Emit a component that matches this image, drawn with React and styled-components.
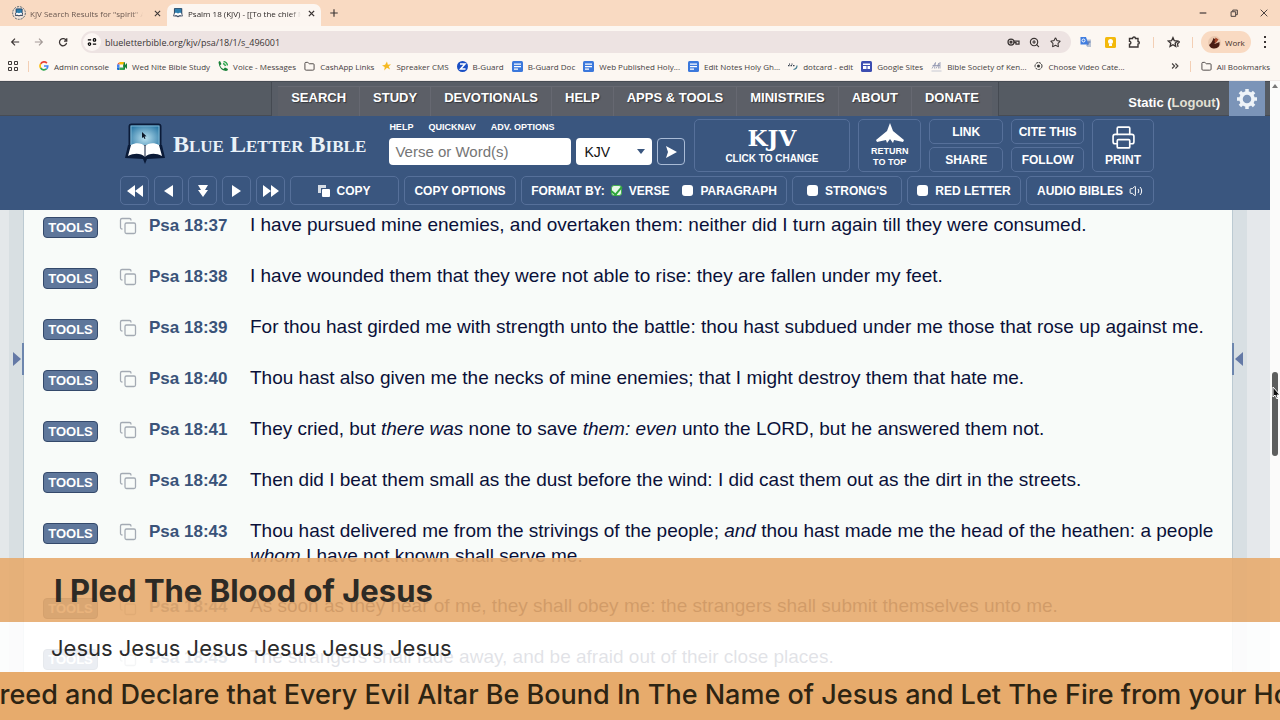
import React from "react";
import styled, { createGlobalStyle, css } from "styled-components";
import { Copy, Printer, Volume2, Star, Folder, ZoomIn } from "lucide-react";

const ui = `"Open Sans", "Noto Sans", sans-serif`;
const arial = `"Liberation Sans", Arial, sans-serif`;
const banner = `Inter, "Liberation Sans", sans-serif`;

const GlobalStyle = createGlobalStyle`
  * { box-sizing: border-box; }
  html, body, #root { height: 100%; }
  body { margin: 0; overflow: hidden; background: #f9fbf9; font-family: ${arial}; }
  button { font: inherit; color: inherit; background: none; border: 0; padding: 0; margin: 0; }
  a { color: inherit; text-decoration: none; }
  svg { display: block; flex: none; }
`;

const Window = styled.div`
  height: 100vh;
  display: flex;
  flex-direction: column;
  overflow: hidden;
  position: relative;
`;

/* ---------- browser chrome ---------- */
const TabStrip = styled.div`
  height: 26px;
  flex: none;
  display: flex;
  align-items: flex-end;
  background: #f9dac2;
  font: 8px ${ui};
  color: #4b4240;
`;
const Tab = styled.div`
  height: 22px;
  width: ${(p) => (p.$active ? 154 : 156)}px;
  margin-left: ${(p) => (p.$active ? 0 : 11)}px;
  padding: 0 5px 4px ${(p) => (p.$active ? 6 : 1)}px;
  display: flex;
  align-items: center;
  gap: ${(p) => (p.$active ? 5 : 4)}px;
  border-radius: 7px 7px 0 0;
  background: ${(p) => (p.$active ? "#fcf6f1" : "transparent")};
  color: ${(p) => (p.$active ? "#2c2726" : "#6a5850")};
`;
const TabTitle = styled.span`
  width: 113px;
  margin-right: auto;
  overflow: hidden;
  white-space: nowrap;
  mask-image: linear-gradient(to right, #000 90%, transparent);
`;
const IconButton = styled.button`
  display: grid;
  place-items: center;
  width: ${(p) => p.$w || 14}px;
  height: 18px;
  color: ${(p) => p.$color || "#3b3534"};
`;
const NewTab = styled(IconButton)`
  margin: 0 auto 4px 6px;
`;
const WindowButtons = styled.div`
  display: flex;
  gap: 13px;
  padding: 0 8px 4px 0;
`;
const AddressRow = styled.div`
  height: 32px;
  flex: none;
  display: flex;
  align-items: center;
  padding: 0 11px 0 8px;
  background: #fcf7f2;
`;
const NavButtons = styled.div`
  display: flex;
  gap: 10px;
  margin-right: 11px;
`;
const AddressBar = styled.div`
  flex: 1;
  height: 22px;
  border-radius: 11px;
  background: #ede3e2;
  display: flex;
  align-items: center;
  padding: 0 9px 0 2px;
`;
const SiteInfo = styled.button`
  width: 18px;
  height: 18px;
  border-radius: 9px;
  background: #fcf6f3;
  display: grid;
  place-items: center;
`;
const UrlInput = styled.input`
  flex: 1;
  border: 0;
  outline: 0;
  padding: 0 0 0 4px;
  background: none;
  font: 9px ${ui};
  color: #3a3535;
`;
const BarIcons = styled.div`
  display: flex;
  gap: 7px;
`;
const Extensions = styled.div`
  display: flex;
  align-items: center;
  gap: 10px;
  margin-left: 8px;
`;
const Divider = styled.i`
  width: 1px;
  height: 11px;
  margin: 0 2px;
  background: #f3cfb5;
`;
const Profile = styled.button`
  width: 50px;
  height: 22px;
  border-radius: 11px;
  background: #f9dac2;
  display: flex;
  align-items: center;
  gap: 4px;
  padding-left: 7px;
  margin: 0 10px 0 -4px;
  font: 8px ${ui};
  color: #3b2a22;
`;
const Bookmarks = styled.nav`
  height: 23px;
  flex: none;
  display: flex;
  align-items: center;
  padding: 0 10px 6px 8px;
  gap: 8px;
  background: #fcf7f2;
  font: 8px ${ui};
  color: #45403e;
  white-space: nowrap;
  border-bottom: 1px solid #efe9e6;
`;
const Bookmark = styled.a`
  display: flex;
  align-items: center;
  gap: 5px;
`;
const More = styled.button`
  margin-left: auto;
`;

/* ---------- site header ---------- */
const Site = styled.div`
  flex: 1;
  min-height: 0;
  display: flex;
`;
const Document = styled.div`
  flex: 1;
  min-width: 0;
  display: flex;
  flex-direction: column;
`;
const TopBar = styled.div`
  flex: none;
  height: 35px;
  display: grid;
  grid-template-columns: 1fr auto 1fr;
  background: #555b63;
  border: 1px solid #474c54;
  border-width: 1px 0;
  color: #fff;
  font-weight: bold;
  font-size: 13px;
`;
const MainNav = styled.nav`
  grid-column: 2;
  display: flex;
  padding: 4px 6px;
  border: 1px solid #454a52;
  border-width: 0 1px;
  background: #585d66;
  text-shadow: 1px 1px 1px #33363c;
`;
const MainLink = styled.a`
  padding: 0 13px;
  background: #5c5f67;
  border: 1px solid #666871;
  border-width: 1px 0;
  line-height: 22px;
  & + & { border-left: 1px solid #666871; }
`;
const Account = styled.div`
  display: flex;
  justify-content: flex-end;
  gap: 9px;
  padding-right: 5px;
  line-height: 42px;
  a { color: #e2e0d4; }
`;
const Gear = styled.button`
  width: 36px;
  height: 36px;
  margin-top: -1px;
  background: #7b94b8;
  color: #eef3f8;
  display: grid;
  place-items: center;
`;
const BlueHeader = styled.header`
  flex: none;
  background: #3a567f;
  color: #fff;
  padding: 3px 0 5px;
  display: flex;
  flex-direction: column;
  align-items: center;
  gap: 4px;
  font-weight: bold;
`;
const HeaderRow = styled.div`
  width: 1038px;
  padding-left: ${(p) => p.$pad}px;
  display: flex;
  gap: ${(p) => p.$gap}px;
`;
const Brand = styled.a`
  display: flex;
  align-items: center;
  gap: 8px;
  width: 257px;
  padding-bottom: 3px;
  font: bold 24px "Liberation Serif", "Times New Roman", serif;
  font-variant: small-caps;
  color: #e9f1f8;
  white-space: nowrap;
`;
const SearchArea = styled.form`
  width: 297px;
`;
const SearchLinks = styled.div`
  display: flex;
  gap: 15px;
  font-size: 9px;
  line-height: 16px;
  margin-bottom: 3px;
`;
const SearchRow = styled.div`
  display: flex;
  gap: 5px;
  height: 27px;
`;
const VerseInput = styled.input`
  width: 182px;
  border: 0;
  border-radius: 4px;
  padding: 0 6px;
  font: 15px ${arial};
  background: #fff;
  &::placeholder { color: #757575; opacity: 1; }
`;
const VersionWrap = styled.span`
  display: grid;
  align-items: center;
  color: #3a567f;
  svg { grid-area: 1 / 1; justify-self: end; margin-right: 7px; pointer-events: none; z-index: 1; }
`;
const VersionSelect = styled.select`
  grid-area: 1 / 1;
  appearance: none;
  width: 76px;
  height: 27px;
  border: 0;
  border-radius: 4px;
  padding: 0 8px;
  background: #fff;
  color: #111;
  font: 14px ${arial};
`;
const outlined = css`
  border: 1px solid #56709a;
  border-radius: 5px;
`;
const GoButton = styled.button`
  width: 28px;
  border: 1px solid #a9bbd6;
  border-radius: 4px;
  display: grid;
  place-items: center;
`;
const Panel = styled.button`
  ${outlined}
  width: ${(p) => p.$w}px;
  height: ${(p) => p.$h || 53}px;
  font-weight: bold;
  font-size: ${(p) => p.$size || 12}px;
  line-height: ${(p) => p.$lh || 14}px;
  display: flex;
  flex-direction: column;
  align-items: center;
  justify-content: center;
  gap: ${(p) => p.$gap || 0}px;
`;
const VersionName = styled.span`
  font: bold 23px "DejaVu Serif", serif;
  line-height: 24px;
`;
const Stack = styled.div`
  display: grid;
  gap: 3px;
`;
const ToolCell = styled.div`
  ${outlined}
  width: ${(p) => p.$w}px;
  height: 29px;
  display: flex;
  align-items: center;
  justify-content: center;
  gap: 6px;
  font-size: 12px;
  white-space: nowrap;
`;
const CheckLabel = styled.label`
  display: flex;
  align-items: center;
  gap: 7px;
  & + & { margin-left: 7px; }
`;
const Check = styled.input`
  appearance: none;
  margin: 0;
  width: 11px;
  height: 11px;
  border-radius: 3px;
  background: #fff;
  display: grid;
  place-items: center;
  &:checked { background: #e8f7e8; border: 1px solid #45b04f; }
  &:checked::after {
    content: "";
    width: 5px;
    height: 9px;
    margin-top: -3px;
    border: solid #2fa63c;
    border-width: 0 2px 2px 0;
    rotate: 40deg;
  }
`;

/* ---------- verses ---------- */
const Reader = styled.div`
  flex: 1;
  min-height: 0;
  display: flex;
`;
const Rail = styled.aside`
  width: ${(p) => (p.$right ? 38 : 24)}px;
  padding-top: 133px;
  display: flex;
  align-items: flex-start;
  justify-content: ${(p) => (p.$right ? "flex-start" : "flex-end")};
  border: solid #bccad2;
  border-width: ${(p) => (p.$right ? "0 0 0 1px" : "0 1px 0 0")};
  background: ${(p) =>
    p.$right
      ? "linear-gradient(to right, #d8dfe3 14px, #e5e8eb 14px)"
      : "linear-gradient(to right, #e4e8ea 9px, #d8dfe2 9px)"};
`;
const RailHandle = styled.button`
  height: 32px;
  width: 12px;
  margin: 0 -1px;
  display: grid;
  place-items: center;
  color: #6479a6;
  border: solid #6d86ae;
  border-width: ${(p) => (p.$right ? "0 0 0 2px" : "0 2px 0 0")};
`;
const Verses = styled.main`
  flex: 1;
  min-width: 0;
  overflow: hidden;
  background: #f8fbf9;
  padding: 2px 16px 0 19px;
`;
const VerseRow = styled.article`
  display: grid;
  grid-template-columns: 76px 30px 101px 1fr;
  align-items: baseline;
  margin-bottom: 25px;
  line-height: 25px;
`;
const ToolsButton = styled.button`
  justify-self: start;
  align-self: start;
  width: 55px;
  height: 21px;
  margin-top: 5px;
  border: 1px solid #34496b;
  border-radius: 4px;
  background: #5f779b;
  color: #fff;
  font-size: 13px;
  font-weight: bold;
  line-height: 18px;
`;
const CopyButton = styled.button`
  align-self: start;
  padding-top: 5px;
  height: 23px;
  color: #a3aab3;
`;
const Reference = styled.a`
  font-size: 17px;
  font-weight: bold;
  color: #3a5379;
`;
const VerseText = styled.p`
  margin: 0;
  font-size: 19px;
  color: #0a1038;
`;

/* ---------- scrollbar ---------- */
const ScrollTrack = styled.div`
  width: 10px;
  background: #fbfbfa;
  color: #777;
  display: flex;
  flex-direction: column;
  align-items: center;
  padding-top: 3px;
`;
const Thumb = styled.i`
  width: 6px;
  height: 84px;
  margin-top: 284px;
  border-radius: 3px;
  background: #5e5f5e;
`;
const Pointer = styled.svg`
  position: absolute;
  left: 1272px;
  top: 386px;
`;

/* ---------- lower third ---------- */
const LowerThird = styled.section`
  position: absolute;
  inset: auto 0 0 0;
  font-family: ${banner};
  white-space: nowrap;
`;
const Headline = styled.h1`
  margin: 0;
  height: 64px;
  padding: 1px 0 0 54px;
  background: rgba(231, 171, 110, 0.9);
  color: #2d2a25;
  font-size: 31px;
  font-weight: 700;
  line-height: 64px;
`;
const Subline = styled.p`
  margin: 0;
  height: 50px;
  padding-left: 51px;
  background: rgba(255, 255, 255, 0.88);
  color: #2b2b2b;
  font-size: 22px;
  font-weight: 400;
  line-height: 52px;
`;
const Ticker = styled.p`
  margin: 0;
  height: 48px;
  padding-right: 6px;
  display: flex;
  justify-content: center;
  overflow: hidden;
  background: #e7ab6c;
  color: #2d2413;
  font-size: 27px;
  font-weight: 500;
  line-height: 46px;
`;

/* ---------- drawings ---------- */
const BibleMark = ({ size = 10, ring }) => (
  <svg width={size} height={size} viewBox="0 0 40 42">
    {ring && <circle cx="20" cy="21" r="19" fill="#f3e3d8" stroke="#55626c" strokeWidth="3" strokeDasharray="6 3" />}
    <g transform={ring ? "translate(8 8) scale(.6)" : undefined}>
      <rect x="5" y="1" width="31" height="26" rx="2" fill="#2f7fae" stroke="#0d1f3c" strokeWidth="3" />
      <path d="M3 22h34l3 13-17 1-3 4-3-4-17-1z" fill="#0d1f3c" />
      <path d="M6 22c5-3 11-2 14 1 3-3 9-4 14-1l3 11c-6-3-13-3-17 1-4-4-11-4-17-1z" fill="#fff" />
    </g>
  </svg>
);
const Logo = () => (
  <svg width="40" height="42" viewBox="0 0 40 42">
    <defs>
      <radialGradient id="screen" cx="50%" cy="55%" r="65%">
        <stop offset="0" stopColor="#b9e0ef" />
        <stop offset="1" stopColor="#1f6f9f" />
      </radialGradient>
    </defs>
    <rect x="4.500" y="1.500" width="31" height="25" rx="2" fill="url(#screen)" stroke="#0b1b38" strokeWidth="2" />
    <rect x="6" y="3" width="28" height="22" fill="none" stroke="#7fb6d3" strokeWidth="1" />
    <path d="M3 22 0 35l18 1 2 5 2-5 18-1-3-13z" fill="#0b1b38" />
    <path d="M6 22c5-3 11-2 14 1 3-3 9-4 14-1l3 11c-6-3-13-3-17 1-4-4-11-4-17-1z" fill="#fff" />
    <path d="M20 23v11" stroke="#0b1b38" strokeWidth="1" />
    <path d="M17 9v6l1.500-1 1 2 1-.5-1-2 2-.2z" fill="#0d1626" />
  </svg>
);
const Cog = () => (
  <svg width="22" height="22" viewBox="0 0 22 22" fill="none" stroke="currentColor">
    <circle cx="11" cy="11" r="6" strokeWidth="3.500" />
    {[0, 45, 90, 135].map((a) => (
      <path key={a} d="M11 1v3.500M11 17.500V21" strokeWidth="3.500" transform={`rotate(${a} 11 11)`} />
    ))}
  </svg>
);
const GoogleG = () => (
  <svg width="10" height="10" viewBox="0 0 24 24" fill="none" strokeWidth="4">
    <path d="M19 5a9.500 9.500 0 0 0-15 2" stroke="#ea4335" />
    <path d="M4 7a9.500 9.500 0 0 0 0 10" stroke="#fbbc05" />
    <path d="M4 17a9.500 9.500 0 0 0 14 2" stroke="#34a853" />
    <path d="M18 19a9.500 9.500 0 0 0 3-7h-9" stroke="#4285f4" />
  </svg>
);
const Meet = () => (
  <svg width="10" height="10" viewBox="0 0 20 20">
    <path d="M0 7l5-5v5z" fill="#ea4335" />
    <path d="M5 2h9v5H5z" fill="#fbbc04" />
    <path d="M0 7h5v6H0z" fill="#4285f4" />
    <path d="M0 13h5v5H2q-2 0-2-2z" fill="#1967d2" />
    <path d="M5 13h9v5H5z" fill="#34a853" />
    <path d="M14 2q2 0 2 2v12q0 2-2 2l-2-8zM15 9l5-5v12l-5-5z" fill="#188038" />
  </svg>
);
const Voice = () => (
  <svg width="10" height="10" viewBox="0 0 20 20">
    <path d="M1 3q0-3 3-3l3 6-3 3q2 5 7 7l3-3 6 3q0 4-4 4Q3 19 1 3z" fill="#188038" />
    <path d="M11 1q7 1 8 8M10 5q4 1 5 5" fill="none" stroke="#34a853" strokeWidth="3" />
  </svg>
);
const Spark = () => (
  <svg width="9" height="10" viewBox="0 0 20 20">
    <path d="M11 0l2 7 7-1-5 5 3 7-7-4-6 6 1-8-6-3 7-2z" fill="#f5b921" />
  </svg>
);
const Zed = () => (
  <svg width="11" height="11" viewBox="0 0 22 22">
    <circle cx="11" cy="11" r="11" fill="#1a4fc4" />
    <path d="M6 6h10l-9 10h10" fill="none" stroke="#fff" strokeWidth="3" />
  </svg>
);
const Doc = () => (
  <svg width="11" height="11" viewBox="0 0 22 22">
    <rect width="22" height="22" rx="3" fill="#3b78dc" />
    <path d="M4 6h14M4 11h14M4 16h8" stroke="#fff" strokeWidth="2.500" />
  </svg>
);
const Dot = () => (
  <svg width="10" height="10" viewBox="0 0 20 20" fill="none" stroke="#384250" strokeWidth="2.500">
    <path d="M0 9h3M5 9h3M10 9h3M2 6h2M7 6h2" />
    <path d="M18 9q0 7-7 8" stroke="#447f93" />
  </svg>
);
const Sites = () => (
  <svg width="11" height="11" viewBox="0 0 22 22">
    <rect width="22" height="22" rx="3" fill="#3c4db1" />
    <path d="M4 5h14v3H4zM4 10h7v6H4zM13 10h5v6h-5z" fill="#fff" />
  </svg>
);
const Society = () => (
  <svg width="11" height="11" viewBox="0 0 22 22" fill="none" stroke="#8b90ac" strokeWidth="1.500">
    <path d="M2 15L9 3l-2 12M10 15l6-11-1 11M3 9h15M18 2v13" />
    <path d="M1 20h20" stroke="#b6b9c8" />
  </svg>
);
const Target = () => (
  <svg width="9" height="10" viewBox="0 0 18 18">
    <circle cx="9" cy="9" r="7" fill="none" stroke="#333" strokeWidth="2" strokeDasharray="5 1.500" />
    <circle cx="9" cy="9" r="3" fill="#333" />
  </svg>
);
const Apps = () => (
  <svg width="10" height="10" viewBox="0 0 20 20" fill="none" stroke="#3f3a38" strokeWidth="2">
    <path d="M1 1h6v6H1zM13 1h6v6h-6zM1 13h6v6H1zM13 13h6v6h-6z" />
  </svg>
);
const Stroke = ({ d, w = 10, sw = 1.4 }) => (
  <svg width={w} height={w} viewBox="0 0 12 12" fill="none" stroke="currentColor" strokeWidth={sw}>
    <path d={d} />
  </svg>
);
const Solid = ({ d, w, h }) => (
  <svg width={w} height={h} viewBox={`0 0 ${w} ${h}`} fill="currentColor">
    <path d={d} />
  </svg>
);

const bookmarks = [
  [GoogleG, "Admin console"],
  [Meet, "Wed Nite Bible Study"],
  [Voice, "Voice - Messages"],
  [() => <Folder size={11} strokeWidth={2} />, "CashApp Links"],
  [Spark, "Spreaker CMS"],
  [Zed, "B-Guard"],
  [Doc, "B-Guard Doc"],
  [Doc, "Web Published Holy..."],
  [Doc, "Edit Notes Holy Gh..."],
  [Dot, "dotcard - edit"],
  [Sites, "Google Sites"],
  [Society, "Bible Society of Ken..."],
  [Target, "Choose Video Cate..."],
];
const sections = ["SEARCH", "STUDY", "DEVOTIONALS", "HELP", "APPS & TOOLS", "MINISTRIES", "ABOUT", "DONATE"];
const jumps = [
  ["Previous book", "M8 0v12L0 6zM16 0v12L8 6z", 16],
  ["Previous chapter", "M9 0v12L0 6z", 9],
  ["Jump to verse", "M0 0h10L7 5h3L5 12 0 5h3z", 10],
  ["Next chapter", "M0 0v12l9-6z", 9],
  ["Next book", "M0 0v12l8-6zM8 0v12l8-6z", 16],
];
const verses = [
  [37, "I have pursued mine enemies, and overtaken them: neither did I turn again till they were consumed."],
  [38, "I have wounded them that they were not able to rise: they are fallen under my feet."],
  [39, "For thou hast girded me with strength unto the battle: thou hast subdued under me those that rose up against me."],
  [40, "Thou hast also given me the necks of mine enemies; that I might destroy them that hate me."],
  [41, <>They cried, but <em>there was</em> none to save <em>them: even</em> unto the LORD, but he answered them not.</>],
  [42, "Then did I beat them small as the dust before the wind: I did cast them out as the dirt in the streets."],
  [43, <>Thou hast delivered me from the strivings of the people; <em>and</em> thou hast made me the head of the heathen: a people <em>whom</em> I have not known shall serve me.</>],
  [44, "As soon as they hear of me, they shall obey me: the strangers shall submit themselves unto me."],
  [45, "The strangers shall fade away, and be afraid out of their close places."],
];

const cross = "M2.500 2.500l7 7M9.500 2.500l-7 7";

function BrowserChrome() {
  return (
    <>
      <TabStrip>
        <Tab>
          <BibleMark size={14} ring />
          <TabTitle>KJV Search Results for "spirit" AN</TabTitle>
          <IconButton $w={10} aria-label="Close tab"><Stroke d={cross} w={9} /></IconButton>
        </Tab>
        <Tab $active>
          <BibleMark size={10} />
          <TabTitle>Psalm 18 (KJV) - [[To the chief M</TabTitle>
          <IconButton $w={10} aria-label="Close tab"><Stroke d={cross} w={9} sw={1.8} /></IconButton>
        </Tab>
        <NewTab aria-label="New tab"><Stroke d="M6 1.500v9M1.500 6h9" w={10} /></NewTab>
        <WindowButtons>
          <IconButton $w={18} aria-label="Minimize"><Stroke d="M2 6h8" /></IconButton>
          <IconButton $w={18} aria-label="Restore"><Stroke d="M2.500 4.500h5.500v5.500h-5.500zM4.500 4V2.500h5.500V8H8.500" sw={1.1} w={10} /></IconButton>
          <IconButton $w={16} aria-label="Close"><Stroke d="M2 2l8 8M10 2l-8 8" sw={1.1} /></IconButton>
        </WindowButtons>
      </TabStrip>
      <AddressRow>
        <NavButtons>
          <IconButton aria-label="Back"><Stroke d="M11 6H2M6 2L2 6l4 4" /></IconButton>
          <IconButton $color="#a39a97" aria-label="Forward"><Stroke d="M1 6h9M6 2l4 4-4 4" /></IconButton>
          <IconButton aria-label="Reload"><Stroke d="M10 4.500A4.300 4.300 0 1 0 10.300 7M10.500 1.500v3.300H7.200" sw={1.5} /></IconButton>
        </NavButtons>
        <AddressBar>
          <SiteInfo aria-label="Site information">
            <Stroke d="M1 3.500h4M7.500 3.500a1.500 1.500 0 1 0 3 0 1.500 1.500 0 1 0-3 0M11 8.500H7M1.500 8.500a1.500 1.500 0 1 0 3 0 1.500 1.500 0 1 0-3 0" />
          </SiteInfo>
          <UrlInput aria-label="Address" defaultValue="blueletterbible.org/kjv/psa/18/1/s_496001" />
          <BarIcons>
            <IconButton aria-label="Passwords">
              <svg width="13" height="8" viewBox="0 0 26 16" fill="none" stroke="currentColor" strokeWidth="2.500">
                <circle cx="8" cy="8" r="6" /><circle cx="8" cy="8" r="2" fill="currentColor" /><path d="M14 6h10v6h-6V9h-4" />
              </svg>
            </IconButton>
            <IconButton aria-label="Zoom"><ZoomIn size={11} strokeWidth={2.5} /></IconButton>
            <IconButton aria-label="Bookmark this page"><Star size={11} strokeWidth={2.3} /></IconButton>
          </BarIcons>
        </AddressBar>
        <Extensions>
          <IconButton aria-label="Translate">
            <svg width="12" height="12" viewBox="0 0 24 24">
              <path d="M10 7h12v15H14z" fill="#b9c3d4" /><path d="M1 2h11l5 15H1z" fill="#3f7de0" />
              <circle cx="7" cy="9" r="3" fill="none" stroke="#fff" strokeWidth="2" /><path d="M14 12h7M18 11q0 5-4 8" stroke="#5a77b5" strokeWidth="2" fill="none" />
            </svg>
          </IconButton>
          <IconButton aria-label="Keep">
            <svg width="11" height="11" viewBox="0 0 22 22">
              <rect width="22" height="22" rx="3" fill="#f3b90c" /><circle cx="11" cy="9" r="5" fill="#fff" /><path d="M8 14h6v4H8z" fill="#fff" />
            </svg>
          </IconButton>
          <IconButton aria-label="Extensions">
            <Stroke d="M1.500 2.500h3a1.500 1.500 0 0 1 3 0h2.500v3a1.300 1.300 0 0 1 0 2.600v2.900h-8.500v-2.800a1.400 1.400 0 0 0 0-2.800z" w={12} />
          </IconButton>
          <Divider />
          <IconButton aria-label="Favourites"><Stroke d="M5.500 1.500l1.200 2.800 3 .3-2.200 2 .6 3-2.600-1.600-2.700 1.600.7-3-2.300-2 3-.3zM9 5l2.500.4-1.800 1.800.5 2.800" w={13} sw={1.2} /></IconButton>
          <Divider />
          <Profile>
            <svg width="13" height="13" viewBox="0 0 26 26">
              <circle cx="13" cy="13" r="13" fill="#e9c7ae" /><path d="M2 18Q8 14 11 4l5 4-3 8 10-4q2 12-11 13Q5 25 2 18z" fill="#4a1c12" /><path d="M15 3l6 4-6 8-2-5z" fill="#a4482c" />
            </svg>
            Work
          </Profile>
        </Extensions>
        <IconButton $w={8} aria-label="Menu"><Solid w={3} h={12} d="M0 0h2v2H0zM0 5h2v2H0zM0 10h2v2H0z" /></IconButton>
      </AddressRow>
      <Bookmarks>
        <Apps />
        <Divider />
        {bookmarks.map(([Icon, label]) => (
          <Bookmark href="#" key={label}><Icon />{label}</Bookmark>
        ))}
        <More aria-label="More bookmarks"><Stroke d="M2.500 3l3 3-3 3M6.500 3l3 3-3 3" w={10} /></More>
        <Divider />
        <Bookmark href="#"><Folder size={11} />All Bookmarks</Bookmark>
      </Bookmarks>
    </>
  );
}

function SiteHeader() {
  return (
    <>
      <TopBar>
        <MainNav>
          {sections.map((s) => <MainLink href="#" key={s}>{s}</MainLink>)}
        </MainNav>
        <Account>
          <span>Static (<a href="#">Logout</a>)</span>
          <Gear aria-label="Settings"><Cog /></Gear>
        </Account>
      </TopBar>
      <BlueHeader>
        <HeaderRow $pad={9} $gap={8}>
          <Brand href="#"><Logo />Blue Letter Bible</Brand>
          <SearchArea>
            <SearchLinks><a href="#">HELP</a><a href="#">QUICKNAV</a><a href="#">ADV. OPTIONS</a></SearchLinks>
            <SearchRow>
              <VerseInput aria-label="Verse or words" placeholder="Verse or Word(s)" />
              <VersionWrap>
                <VersionSelect aria-label="Version" defaultValue="KJV"><option>KJV</option></VersionSelect>
                <Solid w={8} h={5} d="M0 0h8L4 5z" />
              </VersionWrap>
              <GoButton type="button" aria-label="Search"><Solid w={11} h={12} d="M0 0l11 6-11 6 2-6z" /></GoButton>
            </SearchRow>
          </SearchArea>
          <Panel $w={157} $size={10} $gap={2}><VersionName>KJV</VersionName>CLICK TO CHANGE</Panel>
          <Panel $w={63} $size={9} $lh={11} $gap={3}>
            <Solid w={28} h={20} d="M14 0L17 8 28 17 27 19 18 17 17 20 14 16 11 20 10 17 1 19 0 17 11 8z" />
            <span>RETURN<br />TO TOP</span>
          </Panel>
          <Stack><Panel $w={74} $h={25}>LINK</Panel><Panel $w={74} $h={25}>SHARE</Panel></Stack>
          <Stack><Panel $w={73} $h={25}>CITE THIS</Panel><Panel $w={73} $h={25}>FOLLOW</Panel></Stack>
          <Panel $w={62} $gap={3}><Printer size={25} strokeWidth={1.6} />PRINT</Panel>
        </HeaderRow>
        <HeaderRow $pad={4} $gap={5}>
          {jumps.map(([label, d, w]) => (
            <ToolCell as="button" $w={29} key={label} aria-label={label}><Solid w={w} h={12} d={d} /></ToolCell>
          ))}
          <ToolCell as="button" $w={109}>
            <svg width="12" height="12" viewBox="0 0 12 12" fill="#fff"><path d="M0 0h8v3H3v5H0z" opacity=".8" /><rect x="4" y="4" width="8" height="8" rx="1" /></svg>
            COPY
          </ToolCell>
          <ToolCell as="button" $w={112}>COPY OPTIONS</ToolCell>
          <ToolCell $w={266}>
            FORMAT BY:
            <CheckLabel><Check type="checkbox" defaultChecked />VERSE</CheckLabel>
            <CheckLabel><Check type="checkbox" />PARAGRAPH</CheckLabel>
          </ToolCell>
          <ToolCell $w={110}><CheckLabel><Check type="checkbox" />STRONG'S</CheckLabel></ToolCell>
          <ToolCell $w={114}><CheckLabel><Check type="checkbox" />RED LETTER</CheckLabel></ToolCell>
          <ToolCell as="button" $w={128}>AUDIO BIBLES <Volume2 size={14} strokeWidth={1.7} /></ToolCell>
        </HeaderRow>
      </BlueHeader>
    </>
  );
}

export default function App() {
  return (
    <Window>
      <GlobalStyle />
      <BrowserChrome />
      <Site>
        <Document>
          <SiteHeader />
          <Reader>
            <Rail>
              <RailHandle aria-label="Open left panel"><Solid w={8} h={14} d="M0 0l8 7-8 7z" /></RailHandle>
            </Rail>
            <Verses>
              {verses.map(([n, text]) => (
                <VerseRow key={n}>
                  <ToolsButton>TOOLS</ToolsButton>
                  <CopyButton aria-label={`Copy verse ${n}`}><Copy size={18} strokeWidth={1.7} /></CopyButton>
                  <Reference href="#">Psa 18:{n}</Reference>
                  <VerseText>{text}</VerseText>
                </VerseRow>
              ))}
            </Verses>
            <Rail $right>
              <RailHandle $right aria-label="Open right panel"><Solid w={8} h={14} d="M8 0L0 7l8 7z" /></RailHandle>
            </Rail>
          </Reader>
        </Document>
        <ScrollTrack>
          <Solid w={6} h={4} d="M3 0l3 4H0z" />
          <Thumb />
        </ScrollTrack>
      </Site>
      <LowerThird>
        <Headline>I Pled The Blood of Jesus</Headline>
        <Subline>Jesus Jesus Jesus Jesus Jesus Jesus</Subline>
        <Ticker>creed and Declare that Every Evil Altar Be Bound In The Name of Jesus and Let The Fire from your Ho</Ticker>
      </LowerThird>
      <Pointer width="8" height="13" viewBox="0 0 8 13"><path d="M1 1v10l2-2 2 4 1-1-1-3h3z" fill="#111" stroke="#fff" strokeWidth="1" /></Pointer>
    </Window>
  );
}
